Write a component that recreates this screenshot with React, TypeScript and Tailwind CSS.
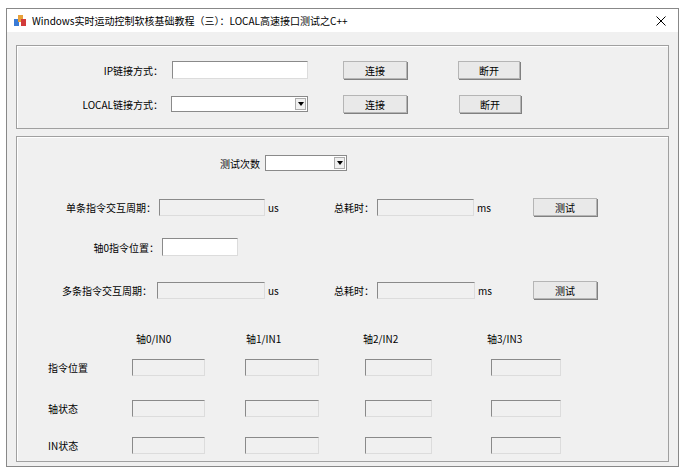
import React from 'react'

const font = { fontFamily: '"Noto Sans CJK SC", "Liberation Sans", sans-serif' }

function Btn({ label, w = 'w-[64px]' }: { label: string; w?: string }) {
  return (
    <div className={`${w} h-[18px] flex items-center justify-center bg-[#e9e9e9] border border-[#b5b5b5] shadow-[1px_1px_0_#808080] text-[10px] text-black`}>
      {label}
    </div>
  )
}

function Box({ w, white = false, h = 'h-[17px]' }: { w: string; white?: boolean; h?: string }) {
  return (
    <div className={`${w} ${h} border border-t-[#8a8a8a] border-l-[#8a8a8a] border-r-[#dcdcdc] border-b-[#dcdcdc] ${white ? 'bg-white' : 'bg-[#f0f0f0]'}`} />
  )
}

function Select({ w }: { w: string }) {
  return (
    <div className={`${w} h-[16px] flex items-center justify-end bg-white border border-[#8a8a8a]`}>
      <div className="w-[11px] h-[12px] mr-[1px] flex items-center justify-center bg-[#f0f0f0] border border-[#adadad]">
        <svg width="6" height="4" viewBox="0 0 6 4"><path d="M0 0h6L3 4z" fill="#000" /></svg>
      </div>
    </div>
  )
}

function Label({ text, w }: { text: string; w: string }) {
  return <div className={`${w} text-right text-[10px] text-black whitespace-nowrap`}>{text}</div>
}

export default function App() {
  return (
    <div className="w-[685px] h-[474px] bg-white pt-[8px] px-[6px]" style={font}>
      <div className="w-[673px] h-[459px] border border-[#888] bg-[#f0f0f0] flex flex-col">
        <div className="h-[23px] bg-white flex items-center px-[6px] text-[10px] text-black">
          <svg width="14" height="13" viewBox="0 0 14 13" className="mr-[5px]">
            <rect x="1" y="5" width="5" height="7" fill="#3a7bd5" />
            <rect x="5" y="1" width="5" height="7" fill="#e8a03a" />
            <rect x="8" y="5" width="5" height="7" fill="#d23b3b" />
          </svg>
          <span>Windows实时运动控制软核基础教程（三）：LOCAL高速接口测试之C++</span>
          <svg width="10" height="10" viewBox="0 0 10 10" className="ml-auto mr-[6px]">
            <path d="M0.5 0.5L9.5 9.5M9.5 0.5L0.5 9.5" stroke="#000" strokeWidth="1" />
          </svg>
        </div>
        <div className="px-[9px] pt-[13px]">
          <div className="h-[84px] border border-[#a0a0a0] shadow-[inset_1px_1px_0_#fff] pt-[15px]">
            <div className="flex items-center h-[18px]">
              <Label text="IP链接方式：" w="w-[146px]" />
              <div className="ml-[9px]"><Box w="w-[136px]" white h="h-[18px]" /></div>
              <div className="ml-[35px]"><Btn label="连接" /></div>
              <div className="ml-[51px]"><Btn label="断开" w="w-[62px]" /></div>
            </div>
            <div className="flex items-center h-[18px] mt-[16px]">
              <Label text="LOCAL链接方式：" w="w-[146px]" />
              <div className="ml-[8px]"><Select w="w-[137px]" /></div>
              <div className="ml-[35px]"><Btn label="连接" /></div>
              <div className="ml-[52px]"><Btn label="断开" w="w-[62px]" /></div>
            </div>
          </div>
          <div className="mt-[7px] h-[326px] border border-[#a0a0a0] shadow-[inset_1px_1px_0_#fff] pt-[18px]">
            <div className="flex items-center h-[16px]">
              <Label text="测试次数" w="w-[243px]" />
              <div className="ml-[5px]"><Select w="w-[82px]" /></div>
            </div>
            <div className="flex items-center h-[18px] mt-[27px]">
              <Label text="单条指令交互周期：" w="w-[139px]" />
              <div className="ml-[3px]"><Box w="w-[106px]" /></div>
              <span className="ml-[3px] text-[10px] w-[20px]">us</span>
              <Label text="总耗时：" w="w-[86px]" />
              <div className="ml-[3px]"><Box w="w-[97px]" /></div>
              <span className="ml-[3px] text-[10px] w-[20px]">ms</span>
              <div className="ml-[36px]"><Btn label="测试" /></div>
            </div>
            <div className="flex items-center h-[18px] mt-[22px]">
              <Label text="轴0指令位置：" w="w-[142px]" />
              <div className="ml-[3px]"><Box w="w-[76px]" white h="h-[18px]" /></div>
            </div>
            <div className="flex items-center h-[18px] mt-[25px]">
              <Label text="多条指令交互周期：" w="w-[135px]" />
              <div className="ml-[5px]"><Box w="w-[108px]" /></div>
              <span className="ml-[3px] text-[10px] w-[20px]">us</span>
              <Label text="总耗时：" w="w-[86px]" />
              <div className="ml-[3px]"><Box w="w-[98px]" /></div>
              <span className="ml-[3px] text-[10px] w-[20px]">ms</span>
              <div className="ml-[35px]"><Btn label="测试" /></div>
            </div>
            <div className="flex items-center h-[14px] mt-[32px] text-[10px]">
              {['轴0/IN0', '轴1/IN1', '轴2/IN2', '轴3/IN3'].map((t, i) => (
                <span key={t} className={`${['ml-[119px]', 'ml-[66px]', 'ml-[73px]', 'ml-[80px]'][i]} w-[44px]`}>{t}</span>
              ))}
            </div>
            {[['指令位置', 'mt-[14px]'], ['轴状态', 'mt-[24px]'], ['IN状态', 'mt-[20px]']].map(([name, mt]) => (
              <div key={name} className={`flex items-center h-[17px] ${mt}`}>
                <span className="w-[115px] pl-[31px] text-[10px]">{name}</span>
                <Box w="w-[73px]" />
                <div className="ml-[40px]"><Box w="w-[74px]" /></div>
                <div className="ml-[46px]"><Box w="w-[67px]" /></div>
                <div className="ml-[59px]"><Box w="w-[70px]" /></div>
              </div>
            ))}
          </div>
        </div>
      </div>
    </div>
  )
}
